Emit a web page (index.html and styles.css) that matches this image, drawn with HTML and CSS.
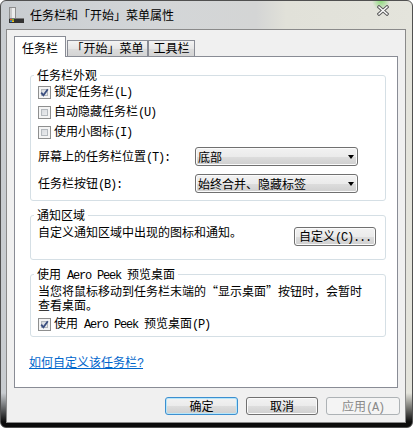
FILE: index.html
```html
<!DOCTYPE html>
<html lang="zh-CN">
<head>
<meta charset="utf-8">
<title>任务栏和「开始」菜单属性</title>
<link rel="stylesheet" href="styles.css">
</head>
<body>
<div class="window">
  <div class="titlebar">
    <svg class="app-icon" width="18" height="18" viewBox="0 0 18 18">
      <rect x="3.5" y="1.5" width="6" height="11" fill="#ececec" stroke="#8e8e8e"/>
      <rect x="4" y="2" width="2" height="10" fill="#c9c9c9"/>
      <rect x="3" y="12" width="15" height="5" fill="#333"/>
      <rect x="3" y="12" width="15" height="1" fill="#7a7a7a"/>
      <rect x="4" y="13" width="2" height="1.5" fill="#e8552a"/>
      <rect x="6" y="13" width="2" height="1.5" fill="#7cbb2c"/>
      <rect x="4" y="14.5" width="2" height="1.5" fill="#2d8fe0"/>
      <rect x="6" y="14.5" width="2" height="1.5" fill="#f7c21a"/>
    </svg>
    <span class="title">任务栏和「开始」菜单属性</span>
    <svg class="close" width="12" height="11" viewBox="0 0 12 11">
      <path d="M2 2 L10 9 M10 2 L2 9" stroke="#5b5b5b" stroke-width="3.4" stroke-linecap="square" fill="none"/>
      <path d="M2 2 L10 9 M10 2 L2 9" stroke="#ffffff" stroke-width="1.4" stroke-linecap="square" fill="none"/>
    </svg>
  </div>

  <div class="client">
    <div class="tabs">
      <div class="tab tab-active">任务栏</div>
      <div class="tab tab-start">「开始」菜单</div>
      <div class="tab tab-tools">工具栏</div>
    </div>

    <div class="panel">
      <div class="group group-look">
        <div class="group-title">任务栏外观</div>
        <div class="check-row">
          <span class="cb"><svg width="9" height="9" viewBox="0 0 9 9"><path d="M1.2 4.6 L3.4 7.2 L7.8 1.2" stroke="#3b4f80" stroke-width="1.8" fill="none"/></svg></span>
          <span>锁定任务栏<span class="m">(L)</span></span>
        </div>
        <div class="check-row">
          <span class="cb"></span>
          <span>自动隐藏任务栏<span class="m">(U)</span></span>
        </div>
        <div class="check-row">
          <span class="cb"></span>
          <span>使用小图标<span class="m">(I)</span></span>
        </div>
        <div class="field-row field-pos">
          <span class="field-label">屏幕上的任务栏位置<span class="m">(T):</span></span>
          <div class="combo"><span>底部</span><span class="arrow"></span></div>
        </div>
        <div class="field-row field-btn">
          <span class="field-label">任务栏按钮<span class="m">(B):</span></span>
          <div class="combo"><span>始终合并、隐藏标签</span><span class="arrow"></span></div>
        </div>
      </div>

      <div class="group group-notify">
        <div class="group-title">通知区域</div>
        <div class="notify-row">
          <span class="notify-text">自定义通知区域中出现的图标和通知。</span>
          <div class="btn btn-custom">自定义<span class="m">(C)...</span></div>
        </div>
      </div>

      <div class="group group-peek">
        <div class="group-title">使用<span class="m"> Aero Peek </span>预览桌面</div>
        <p class="peek-text">当您将鼠标移动到任务栏末端的“显示桌面”按钮时，会暂时<br>查看桌面。</p>
        <div class="check-row">
          <span class="cb"><svg width="9" height="9" viewBox="0 0 9 9"><path d="M1.2 4.6 L3.4 7.2 L7.8 1.2" stroke="#3b4f80" stroke-width="1.8" fill="none"/></svg></span>
          <span>使用<span class="m"> Aero Peek </span>预览桌面<span class="m">(P)</span></span>
        </div>
      </div>

      <a class="help-link" href="#">如何自定义该任务栏<span class="m">?</span></a>
    </div>

    <div class="buttons">
      <div class="btn btn-default btn-ok">确定</div>
      <div class="btn btn-cancel">取消</div>
      <div class="btn btn-disabled btn-apply">应用<span class="m">(A)</span></div>
    </div>
  </div>
</div>
</body>
</html>
```

FILE: styles.css
```css
* {
  box-sizing: border-box;
}

body {
  margin: 0;
  background: #ffffff;
  font-family: "Noto Sans CJK SC", "Noto Sans", sans-serif;
  font-size: 12px;
  line-height: 14px;
  color: #000000;
}

.m {
  font-family: "Liberation Mono", monospace;
  font-size: 12px;
  letter-spacing: -1.2px;
}

.window {
  width: 413px;
  height: 428px;
  border: 1px solid #505050;
  border-radius: 6px;
  padding: 0 6px 4px 5px;
  display: flex;
  flex-direction: column;
  background:
    radial-gradient(circle at 380px 0, rgba(110, 215, 90, 0.75) 0, rgba(110, 215, 90, 0) 9px),
    linear-gradient(to bottom, rgba(0, 0, 0, 0) 0, rgba(0, 0, 0, 0) 392px, rgba(0, 0, 0, 0.95) 421px),
    linear-gradient(90deg, #c8ccd0 0, #d3d6d8 150px, #d4d5d5 255px, #e1e1d9 285px, #e4e4dc 413px);
}

.titlebar {
  height: 28px;
  display: flex;
  align-items: center;
}

.app-icon {
  flex: none;
}

.title {
  margin-left: 6px;
  line-height: 14px;
}

.close {
  margin-left: auto;
  margin-right: 17px;
  align-self: flex-start;
  margin-top: 4px;
}

.client {
  flex: 1;
  border: 1px solid #8a8a8a;
  background: #f0f0f0;
  padding: 6px 7px 0 7px;
  display: flex;
  flex-direction: column;
}

.tabs {
  height: 20px;
  display: flex;
  align-items: flex-end;
}

.tab {
  height: 16px;
  border: 1px solid #898c95;
  border-bottom: none;
  background: linear-gradient(#f3f3f3, #e6e6e6 50%, #dcdcdc 51%, #d4d4d4);
  text-align: center;
  line-height: 14px;
}

.tab-active {
  position: relative;
  z-index: 1;
  height: 21px;
  margin-bottom: -1px;
  padding-top: 4px;
  background: #ffffff;
  width: 52px;
}

.tab-start {
  width: 81px;
  margin-left: 1px;
}

.tab-tools {
  width: 47px;
}

.panel {
  height: 332px;
  border: 1px solid #898c95;
  background: #ffffff;
  padding: 18px 11px 0 15px;
  display: flex;
  flex-direction: column;
  align-items: flex-start;
}

.group {
  align-self: stretch;
  border: 1px solid #d5dfe5;
  border-radius: 3px;
  padding: 0 9px 0 7px;
}

.group-title {
  width: max-content;
  height: 14px;
  margin: -8px 0 0 -4px;
  padding: 0 3px;
  background: #ffffff;
  line-height: 14px;
}

.group-look {
  padding-bottom: 7px;
}

.group-look .check-row:first-of-type {
  margin-top: 2px;
}

.check-row {
  height: 20px;
  display: flex;
  align-items: center;
  gap: 3px;
}

.cb {
  flex: none;
  width: 13px;
  height: 13px;
  border: 1px solid #8e8f8f;
  background: linear-gradient(135deg, #cdd1d6, #f6f6f6);
  box-shadow: inset 0 0 0 2px #f4f4f4, inset 0 0 0 3px #b4b9be;
  display: flex;
  align-items: center;
  justify-content: center;
}

.cb svg {
  display: block;
}

.field-row {
  height: 19px;
  display: flex;
  align-items: center;
}

.field-pos {
  margin-top: 5px;
}

.field-btn {
  margin-top: 8px;
}

.field-label {
  width: 157px;
  flex: none;
}

.combo {
  width: 163px;
  height: 19px;
  border: 1px solid #707070;
  border-radius: 3px;
  background: linear-gradient(#f2f2f2, #ebebeb 50%, #dddddd 51%, #cfcfcf);
  box-shadow: inset 0 0 0 1px #fbfbfb;
  display: flex;
  align-items: center;
  padding-left: 2px;
}

.arrow {
  margin-left: auto;
  margin-right: 3px;
  width: 0;
  height: 0;
  border-top: 4px solid #000000;
  border-left: 3.5px solid transparent;
  border-right: 3.5px solid transparent;
}

.group-notify {
  margin-top: 14px;
  padding-bottom: 13px;
}

.notify-row {
  margin-top: 3px;
  display: flex;
  align-items: flex-start;
  justify-content: space-between;
}

.btn {
  height: 18px;
  border: 1px solid #707070;
  border-radius: 3px;
  background: linear-gradient(#f2f2f2, #ebebeb 50%, #dddddd 51%, #cfcfcf);
  box-shadow: inset 0 0 0 1px #fbfbfb;
  text-align: center;
  line-height: 15px;
}

.btn-custom {
  width: 82px;
  height: 19px;
  margin-top: 2px;
  line-height: 16px;
}

.group-peek {
  margin-top: 14px;
  padding-bottom: 2px;
}

.peek-text {
  margin: 3px 0 0 0;
  line-height: 14px;
}

.group-peek .check-row {
  margin-top: 2px;
}

.help-link {
  margin-top: 18px;
  margin-left: -1px;
  color: #0066cc;
  text-decoration: underline;
  line-height: 14px;
}

.buttons {
  margin-top: 9px;
  margin-right: -2px;
  display: flex;
  justify-content: flex-end;
  gap: 8px;
}

.btn-ok {
  width: 73px;
}

.btn-cancel {
  width: 72px;
}

.btn-apply {
  width: 74px;
}

.btn-default {
  border-color: #3c8fd0;
  box-shadow: inset 0 0 0 1px #b6e6fa;
}

.btn-disabled {
  border-color: #adb2b5;
  background: #f4f4f4;
  box-shadow: none;
  color: #8a8a8a;
}
```
